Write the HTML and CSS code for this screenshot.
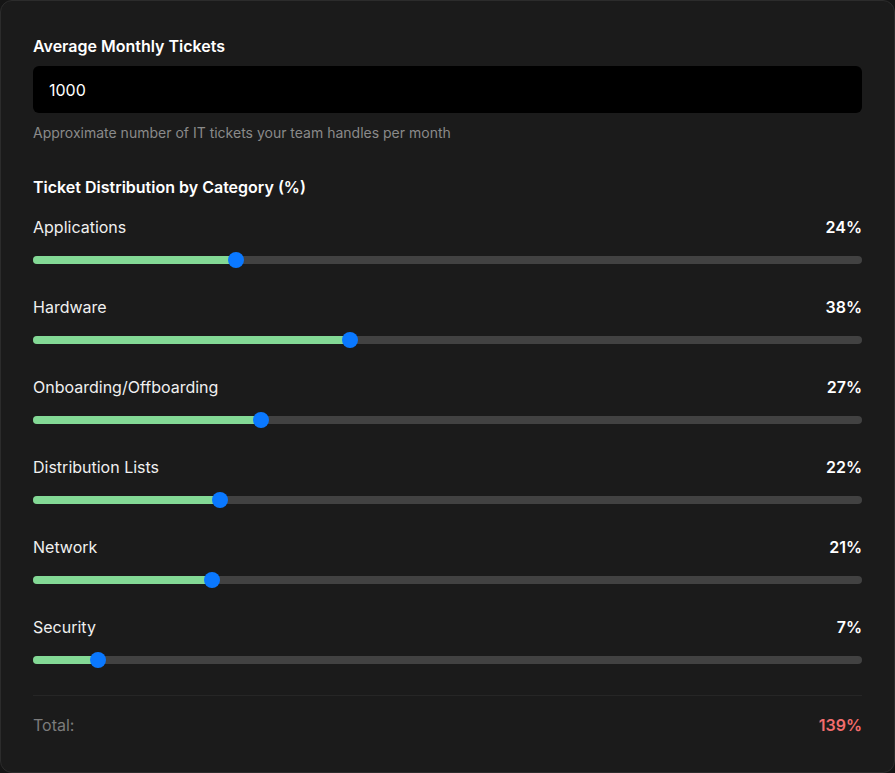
FILE: index.html
```html
<!DOCTYPE html>
<html lang="en">
<head>
<meta charset="utf-8">
<title>Ticket Distribution</title>
<link rel="stylesheet" href="styles.css">
</head>
<body>
<div class="card">
  <div class="field">
    <label class="field-title" for="tickets">Average Monthly Tickets</label>
    <div class="input">1000</div>
    <p class="help">Approximate number of IT tickets your team handles per month</p>
  </div>

  <h3 class="section-title">Ticket Distribution by Category (%)</h3>

  <div class="rows">
    <div class="row">
      <div class="row-head"><span class="label">Applications</span><span class="value">24%</span></div>
      <div class="track"><div class="fill" style="width: calc(8px + (100% - 16px) * 0.24)"></div><div class="thumb" style="left: calc((100% - 16px) * 0.24)"></div></div>
    </div>
    <div class="row">
      <div class="row-head"><span class="label">Hardware</span><span class="value">38%</span></div>
      <div class="track"><div class="fill" style="width: calc(8px + (100% - 16px) * 0.38)"></div><div class="thumb" style="left: calc((100% - 16px) * 0.38)"></div></div>
    </div>
    <div class="row">
      <div class="row-head"><span class="label">Onboarding/Offboarding</span><span class="value">27%</span></div>
      <div class="track"><div class="fill" style="width: calc(8px + (100% - 16px) * 0.27)"></div><div class="thumb" style="left: calc((100% - 16px) * 0.27)"></div></div>
    </div>
    <div class="row">
      <div class="row-head"><span class="label">Distribution Lists</span><span class="value">22%</span></div>
      <div class="track"><div class="fill" style="width: calc(8px + (100% - 16px) * 0.22)"></div><div class="thumb" style="left: calc((100% - 16px) * 0.22)"></div></div>
    </div>
    <div class="row">
      <div class="row-head"><span class="label">Network</span><span class="value">21%</span></div>
      <div class="track"><div class="fill" style="width: calc(8px + (100% - 16px) * 0.21)"></div><div class="thumb" style="left: calc((100% - 16px) * 0.21)"></div></div>
    </div>
    <div class="row">
      <div class="row-head"><span class="label">Security</span><span class="value">7%</span></div>
      <div class="track"><div class="fill" style="width: calc(8px + (100% - 16px) * 0.07)"></div><div class="thumb" style="left: calc((100% - 16px) * 0.07)"></div></div>
    </div>
  </div>

  <div class="total">
    <span class="total-label">Total:</span>
    <span class="total-value">139%</span>
  </div>
</div>
</body>
</html>
```

FILE: styles.css
```css
* { box-sizing: border-box; }
html, body { margin: 0; padding: 0; }
body {
  background: #151515;
  font-family: Inter, "Noto Sans", sans-serif;
  color: #ffffff;
}
.card {
  width: 895px;
  height: 773px;
  background: #1b1b1b;
  border: 1px solid #2c2c2c;
  border-radius: 12px;
  padding: 33px 32px 0 32px;
}
.field-title {
  display: block;
  font-size: 16px;
  font-weight: 600;
  line-height: 24px;
  margin: 0 0 8px 0;
}
.input {
  height: 47px;
  background: #000000;
  border-radius: 6px;
  padding: 0 16px;
  display: flex;
  align-items: center;
  font-size: 16px;
  color: #ffffff;
}
.help {
  margin: 10px 0 0 0;
  font-size: 14px;
  line-height: 20px;
  color: #8a8a8a;
}
.section-title {
  margin: 32px 0 16px 0;
  font-size: 16px;
  font-weight: 600;
  line-height: 24px;
}
.row {
  padding-bottom: 31px;
}
.row-head {
  display: flex;
  justify-content: space-between;
  align-items: center;
  height: 24px;
  margin-bottom: 17px;
}
.label {
  font-size: 16px;
  color: #f0f0f0;
}
.value {
  font-size: 16px;
  font-weight: 600;
  color: #ffffff;
}
.track {
  position: relative;
  height: 8px;
  border-radius: 4px;
  background: #424242;
}
.fill {
  height: 8px;
  border-radius: 4px;
  background: #83d995;
}
.thumb {
  position: absolute;
  top: -4px;
  width: 16px;
  height: 16px;
  border-radius: 50%;
  background: #0a78ff;
}
.total {
  border-top: 1px solid #262626;
  display: flex;
  justify-content: space-between;
  align-items: center;
  padding-top: 17px;
  line-height: 24px;
}
.total-label {
  font-size: 16px;
  color: #7c7c7c;
}
.total-value {
  font-size: 16px;
  font-weight: 600;
  color: #f26d6d;
}
```
